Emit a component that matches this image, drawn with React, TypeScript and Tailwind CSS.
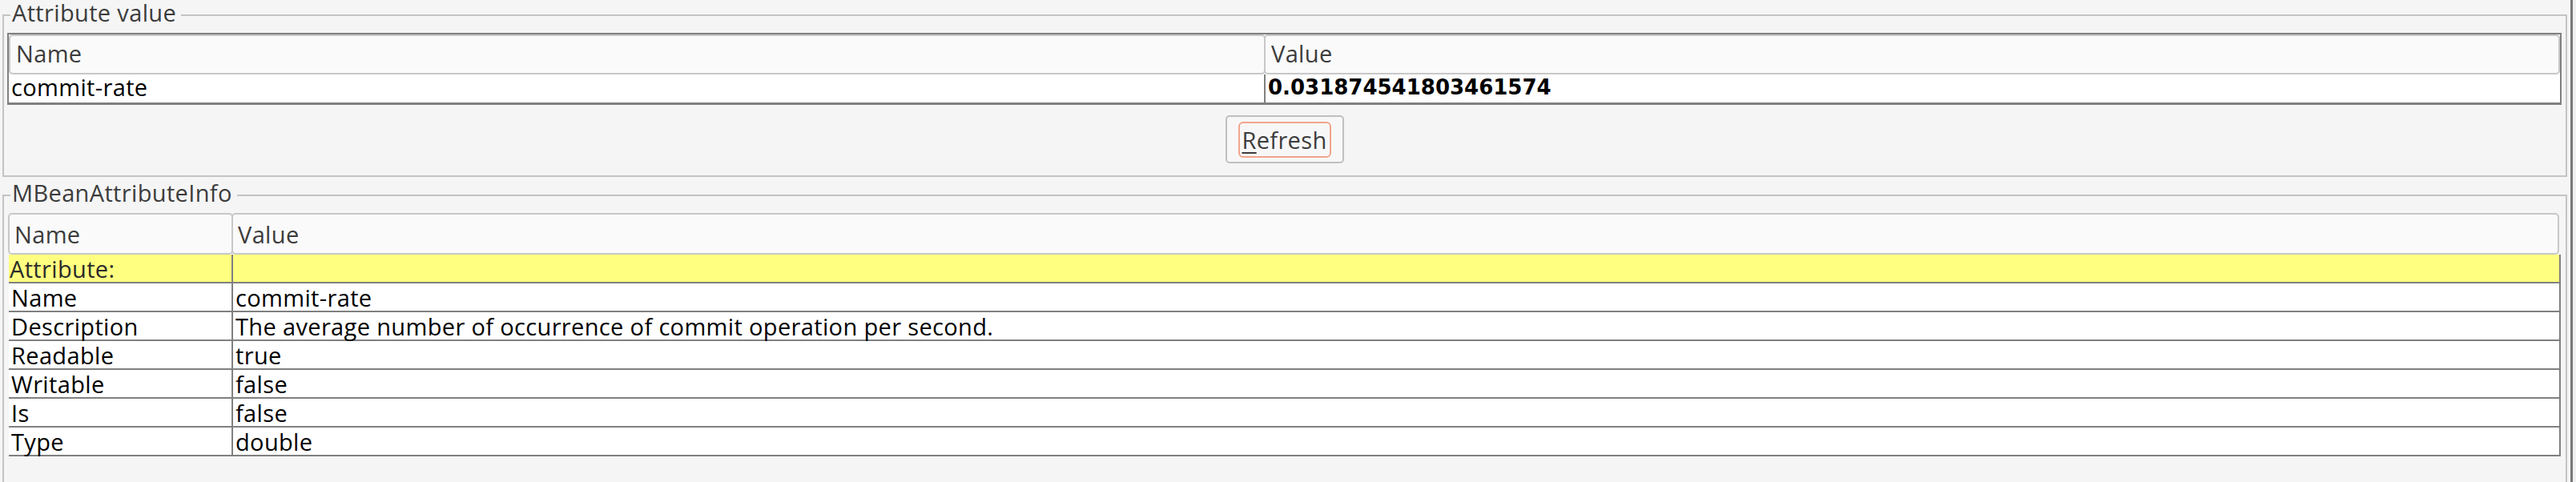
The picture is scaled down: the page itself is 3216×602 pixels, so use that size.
import React from "react";

const rows2: [string, string][] = [
  ["Name", "commit-rate"],
  ["Description", "The average number of occurrence of commit operation per second."],
  ["Readable", "true"],
  ["Writable", "false"],
  ["Is", "false"],
  ["Type", "double"],
];

export default function App() {
  return (
    <div className="w-[3216px] h-[602px] overflow-hidden bg-[#f5f5f5] flex font-['Open_Sans',sans-serif] text-[29px] leading-none tracking-[0.35px]">
      <div className="w-[3209px] flex flex-col pl-[3px] pr-[4px]">
        {/* Attribute value */}
        <fieldset className="mt-[4px] border-2 border-[#c4c4c4] pl-[4px] pr-[5px] pb-[15px] flex flex-col">
          <legend className="ml-[4px] pl-[2px] pr-[6px] leading-[24px] pb-[6px] text-[#3c3c3c]">Attribute value</legend>
          <div className="mt-[7px] border-2 border-[#808080] flex flex-col bg-white">
            <div className="h-[50px] flex bg-[#f5f5f5]">
              <div className="w-[1569px] h-full border-2 border-[#c8c8c8] rounded-[5px] bg-[#fafafa] flex items-center pl-[7px] pb-[4px] text-[#3c3c3c]">Name</div>
              <div className="flex-1 -ml-[2px] h-full border-2 border-[#c8c8c8] rounded-[5px] bg-[#fafafa] flex items-center pl-[7px] pb-[4px] text-[#3c3c3c]">Value</div>
            </div>
            <div className="h-[36px] flex border-b border-[#808080]">
              <div className="w-[1569px] border-r-2 border-[#808080] flex items-center pl-[3px] pb-[4px] text-black">commit-rate</div>
              <div className="flex-1 flex items-center pl-[3px] pb-[4px] text-black font-['DejaVu_Sans',sans-serif] font-bold text-[26px] tracking-normal">0.031874541803461574</div>
            </div>
          </div>
          <button className="mt-[13px] self-center w-[148px] h-[60px] border-2 border-[#c0c0c0] rounded-[5px] bg-[#f7f7f7] flex items-center justify-center">
            <span className="h-[45px] w-[116px] border-2 border-[#f2a48c] rounded-[6px] flex items-center justify-center text-[#3c3c3c]">
              <span><u className="decoration-2 underline-offset-[4px]">R</u>efresh</span>
            </span>
          </button>
        </fieldset>

        {/* MBeanAttributeInfo */}
        <fieldset className="mt-[8px] border-2 border-[#c4c4c4] pl-[5px] pr-[6px] pb-[60px] flex flex-col">
          <legend className="ml-[3px] pl-[2px] pr-[6px] leading-[24px] pb-[6px] text-[#3c3c3c]">MBeanAttributeInfo</legend>
          <div className="mt-[7px] flex flex-col">
            <div className="h-[52px] flex pr-[2px]">
              <div className="w-[281px] h-full border-2 border-[#c8c8c8] rounded-[5px] bg-[#fafafa] flex items-center pl-[6px] text-[#3c3c3c]">Name</div>
              <div className="flex-1 -ml-[2px] h-full border-2 border-[#c8c8c8] rounded-[5px] bg-[#fafafa] flex items-center pl-[6px] text-[#3c3c3c]">Value</div>
            </div>
            <div className="h-[36px] flex border-b-2 border-[#808080] bg-[#ffff80] ml-[1px]">
              <div className="w-[280px] border-r-2 border-[#808080] flex items-center pl-[1px] text-[#2a2a2a]">Attribute:</div>
              <div className="flex-1 border-r-2 border-[#808080]"></div>
            </div>
            {rows2.map(([k, v]) => (
              <div key={k} className="h-[36px] flex border-b-2 border-[#808080] bg-white ml-[1px]">
                <div className="w-[280px] border-r-2 border-[#808080] flex items-center pl-[3px] text-black">{k}</div>
                <div className="flex-1 border-r-2 border-[#808080] flex items-center pl-[3px] text-black">{v}</div>
              </div>
            ))}
          </div>
        </fieldset>
      </div>
      <div className="w-[3px] bg-[#777777]"></div>
      <div className="flex-1 bg-[#f0f0f0]"></div>
    </div>
  );
}
